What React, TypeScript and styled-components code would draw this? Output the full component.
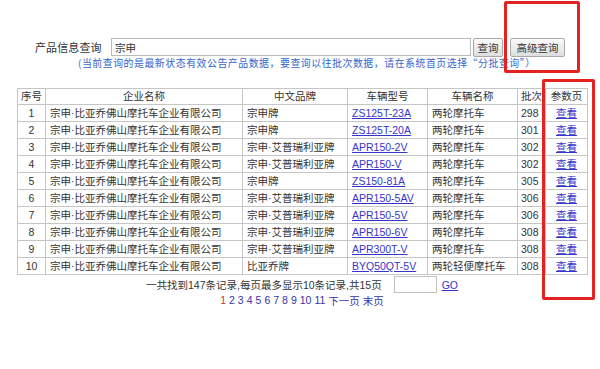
import React from "react";
import styled, { createGlobalStyle } from "styled-components";

const GlobalStyle = createGlobalStyle`
  html, body {
    margin: 0;
    padding: 0;
    background: #fff;
  }
  body {
    font-family: "Liberation Sans", "Noto Sans CJK SC", sans-serif;
    color: #333;
  }
`;

type Row = {
  no: number;
  brand: string;
  model: string;
  name: string;
  batch: string;
};

const company = "宗申·比亚乔佛山摩托车企业有限公司";

const rows: Row[] = [
  { no: 1, brand: "宗申牌", model: "ZS125T-23A", name: "两轮摩托车", batch: "298" },
  { no: 2, brand: "宗申牌", model: "ZS125T-20A", name: "两轮摩托车", batch: "301" },
  { no: 3, brand: "宗申·艾普瑞利亚牌", model: "APR150-2V", name: "两轮摩托车", batch: "302" },
  { no: 4, brand: "宗申·艾普瑞利亚牌", model: "APR150-V", name: "两轮摩托车", batch: "302" },
  { no: 5, brand: "宗申牌", model: "ZS150-81A", name: "两轮摩托车", batch: "305" },
  { no: 6, brand: "宗申·艾普瑞利亚牌", model: "APR150-5AV", name: "两轮摩托车", batch: "306" },
  { no: 7, brand: "宗申·艾普瑞利亚牌", model: "APR150-5V", name: "两轮摩托车", batch: "306" },
  { no: 8, brand: "宗申·艾普瑞利亚牌", model: "APR150-6V", name: "两轮摩托车", batch: "308" },
  { no: 9, brand: "宗申·艾普瑞利亚牌", model: "APR300T-V", name: "两轮摩托车", batch: "308" },
  { no: 10, brand: "比亚乔牌", model: "BYQ50QT-5V", name: "两轮轻便摩托车", batch: "308" },
];

const columns = [28, 197, 105, 80, 90, 28, 42];

export default function App() {
  return (
    <>
      <GlobalStyle />
      <Page>
        <SearchRow>
          <Label>产品信息查询</Label>
          <SearchInput defaultValue="宗申" />
          <Button>查询</Button>
          <Button $wide>高级查询</Button>
        </SearchRow>
        <Note>
          (当前查询的是最新状态有效公告产品数据，要查询以往批次数据，请在系统首页选择“分批查询”）
        </Note>
        <Table>
          <colgroup>
            {columns.map((w, i) => (
              <col key={i} style={{ width: w }} />
            ))}
          </colgroup>
          <thead>
            <tr>
              <Th>序号</Th>
              <Th>企业名称</Th>
              <Th>中文品牌</Th>
              <Th>车辆型号</Th>
              <Th>车辆名称</Th>
              <Th>批次</Th>
              <Th>参数页</Th>
            </tr>
          </thead>
          <tbody>
            {rows.map((r) => (
              <tr key={r.no}>
                <Td $center>{r.no}</Td>
                <Td>{company}</Td>
                <Td>{r.brand}</Td>
                <Td>
                  <Link>{r.model}</Link>
                </Td>
                <Td>{r.name}</Td>
                <Td $tight>{r.batch}</Td>
                <Td $center>
                  <Link>查看</Link>
                </Td>
              </tr>
            ))}
          </tbody>
        </Table>
        <Pager>
          <PagerLine>
            <span>一共找到147条记录,每页最多显示10条记录,共15页</span>
            <PageInput />
            <Link>GO</Link>
          </PagerLine>
          <PagerLine $small>
            <Current>1</Current>
            {[2, 3, 4, 5, 6, 7, 8, 9, 10, 11].map((n) => (
              <PageNum key={n}>{n}</PageNum>
            ))}
            <PageNum>下一页</PageNum>
            <PageNum>末页</PageNum>
          </PagerLine>
        </Pager>
        <Mark $x={504} $y={1} $w={76} $h={72} />
        <Mark $x={542} $y={79} $w={53} $h={221} />
      </Page>
    </>
  );
}

const Page = styled.div`
  position: relative;
  width: 600px;
  height: 369px;
  padding: 38px 0 0 17px;
  box-sizing: border-box;
  font-size: 10.5px;
`;

const SearchRow = styled.div`
  display: flex;
  align-items: center;
  padding-left: 18px;
  height: 18px;
`;

const Label = styled.span`
  font-size: 11px;
  letter-spacing: 0.1px;
  color: #333;
  width: 76px;
`;

const SearchInput = styled.input`
  box-sizing: border-box;
  width: 360px;
  height: 18px;
  border: 1px solid #b9b9b9;
  padding: 0 3px;
  font-family: inherit;
  font-size: 10.5px;
  color: #333;
  outline: none;
`;

const Button = styled.button<{ $wide?: boolean }>`
  box-sizing: border-box;
  width: ${(p) => (p.$wide ? 55 : 30)}px;
  height: 19px;
  margin-left: ${(p) => (p.$wide ? 7 : 2)}px;
  padding: 0;
  border: 1px solid #a8a8a8;
  border-radius: 2px;
  background: linear-gradient(#fafafa, #dedede);
  font-family: inherit;
  font-size: 10.5px;
  color: #333;
`;

const Note = styled.div`
  margin: 1px 0 0 61px;
  font-family: "Noto Sans CJK SC", "Liberation Sans", sans-serif;
  font-size: 9.9px;
  letter-spacing: 0.55px;
  line-height: 12px;
  color: #3366cc;
  white-space: nowrap;
`;

const Table = styled.table`
  margin-top: 19px;
  width: 570px;
  table-layout: fixed;
  border-collapse: collapse;
  font-size: 10.5px;
  color: #333;
`;

const Th = styled.th`
  height: 15px;
  padding: 0;
  border: 1px solid #c6c6c6;
  font-weight: normal;
  text-align: center;
  white-space: nowrap;
  overflow: hidden;
  line-height: 15px;
`;

const Td = styled.td<{ $center?: boolean; $tight?: boolean }>`
  height: 16px;
  padding: 0 ${(p) => (p.$tight ? 0 : 4)}px 0 ${(p) => (p.$tight ? 3 : 4)}px;
  border: 1px solid #c6c6c6;
  text-align: ${(p) => (p.$center ? "center" : "left")};
  white-space: nowrap;
  overflow: hidden;
  line-height: 16px;
`;

const Link = styled.a`
  color: #3535cc;
  text-decoration: underline;
  cursor: pointer;
`;

const Pager = styled.div`
  width: 570px;
  display: flex;
  flex-direction: column;
  align-items: center;
`;

const PagerLine = styled.div<{ $small?: boolean }>`
  display: flex;
  align-items: center;
  gap: ${(p) => (p.$small ? 3 : 0)}px;
  height: ${(p) => (p.$small ? 12 : 19)}px;
  font-size: 10.5px;
  color: #333;
`;

const PageInput = styled.input`
  box-sizing: border-box;
  width: 43px;
  height: 17px;
  margin: 0 5px 0 12px;
  border: 1px solid #c2c2c2;
  outline: none;
`;

const Current = styled.span`
  color: #e03030;
`;

const PageNum = styled.span`
  color: #3333aa;
  cursor: pointer;
`;

const Mark = styled.div<{ $x: number; $y: number; $w: number; $h: number }>`
  position: absolute;
  left: ${(p) => p.$x}px;
  top: ${(p) => p.$y}px;
  width: ${(p) => p.$w}px;
  height: ${(p) => p.$h}px;
  box-sizing: border-box;
  border: 3px solid #e52222;
  border-radius: 2px;
  pointer-events: none;
`;
